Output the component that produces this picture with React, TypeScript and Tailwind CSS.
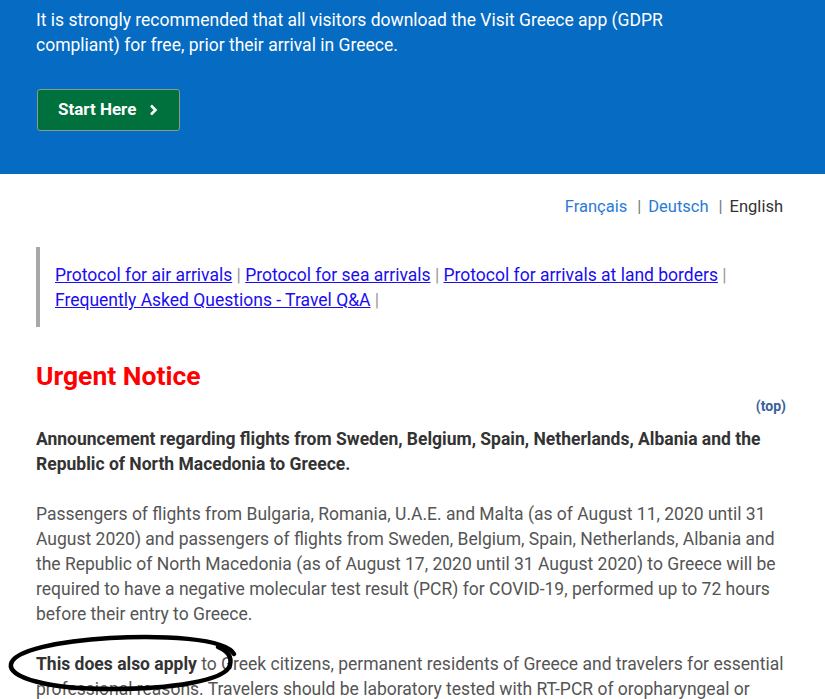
const Sep = () => <span className="text-[#999]"> | </span>;

const App = () => {
    return (
        <div className="relative w-[825px] h-[699px] overflow-hidden bg-white font-['Roboto',sans-serif]">
            {/* top banner */}
            <div className="bg-[#066bc2] h-[174px] px-[36px] pt-[8px]">
                <p className="max-w-[700px] text-white text-[17.5px] leading-[25px]">
                    It is strongly recommended that all visitors download the Visit Greece app (GDPR compliant) for free, prior their arrival in Greece.
                </p>
                <button className="mt-[31px] ml-[1px] h-[42px] w-[143px] flex items-center pl-[20px] bg-[#00703c] border border-[#8a9a8f] rounded-[3px] text-white font-bold text-[17px]">
                    Start Here
                    <svg className="ml-[13px]" width="9" height="12" viewBox="0 0 9 12">
                        <path d="M2 1.5 L6.5 6 L2 10.5" fill="none" stroke="#fff" strokeWidth="2.6" />
                    </svg>
                </button>
            </div>

            <div className="px-[36px]">
                <div className="flex justify-end pt-[20px] pr-[6px] text-[16.5px] leading-[25px]">
                    <a className="text-[#2a7ad6]">Français</a>
                    <span className="text-[#777] ml-[10px] mr-[7px]">|</span>
                    <a className="text-[#2a7ad6]">Deutsch</a>
                    <span className="text-[#777] ml-[10px] mr-[7px]">|</span>
                    <span className="text-[#333]">English</span>
                </div>

                <div className="mt-[28px] border-l-[4px] border-[#a8a8a8] pl-[15px] pt-[16px] pb-[14px] text-[17.5px] leading-[25px]">
                    <a className="text-[#1a0dee] underline">Protocol for air arrivals</a><Sep />
                    <a className="text-[#1a0dee] underline">Protocol for sea arrivals</a><Sep />
                    <a className="text-[#1a0dee] underline">Protocol for arrivals at land borders</a><Sep />
                    <br />
                    <a className="text-[#1a0dee] underline">Frequently Asked Questions - Travel Q&amp;A</a><Sep />
                </div>

                <h2 className="mt-[32px] text-[#ff0000] font-bold text-[26.5px] leading-[34px]">Urgent Notice</h2>
                <div className="flex justify-end mt-[3px] pr-[3px]">
                    <a className="text-[#3a5e9c] font-bold text-[14px] leading-[20px]">(top)</a>
                </div>
                <p className="mt-[11px] text-[#333] font-bold text-[17.5px] leading-[25px]">
                    Announcement regarding flights from Sweden, Belgium, Spain, Netherlands, Albania and the Republic of North Macedonia to Greece.
                </p>
                <p className="mt-[25px] text-[#555] text-[17.5px] leading-[25px]">
                    Passengers of flights from Bulgaria, Romania, U.A.E. and Malta (as of August 11, 2020 until 31 August 2020) and passengers of flights from Sweden, Belgium, Spain, Netherlands, Albania and the Republic of North Macedonia (as of August 17, 2020 until 31 August 2020) to Greece will be required to have a negative molecular test result (PCR) for COVID-19, performed up to 72 hours before their entry to Greece.
                </p>
                <p className="mt-[25px] text-[#555] text-[17.5px] leading-[25px]">
                    <b className="text-[#333]">This does also apply</b> to Greek citizens, permanent residents of Greece and travelers for essential professional reasons. Travelers should be laboratory tested with RT-PCR of oropharyngeal or nasopharyngeal specimen.
                </p>
            </div>

            {/* hand-drawn annotation ellipse */}
            <svg className="absolute left-0 top-[620px]" width="260" height="79" viewBox="0 620 260 79">
                <path d="M234 654 C 226 638, 160 635, 110 638 C 60 641, 14 650, 11 664 C 8 678, 50 689, 110 689 C 170 689, 226 681, 230 665 C 232 657, 228 651, 218 647" fill="none" stroke="#000" strokeWidth="4.5" strokeLinecap="round" />
            </svg>
        </div>
    );
};

export default App;
